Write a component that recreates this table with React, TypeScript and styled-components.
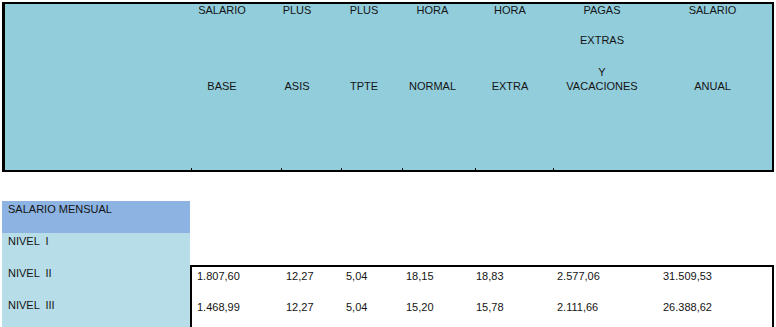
import React from 'react';
import styled, { createGlobalStyle } from 'styled-components';

const GlobalStyle = createGlobalStyle`
  html, body {
    margin: 0;
    padding: 0;
    background: #ffffff;
    overflow: hidden;
  }
  body {
    font-family: "Liberation Sans", Arial, sans-serif;
    font-size: 11px;
    line-height: 13px;
    color: #141414;
  }
`;

const Sheet = styled.div`
  width: 776px;
  height: 327px;
  overflow: hidden;
`;

const HeaderPanel = styled.div`
  margin: 2px 0 0 2px;
  width: 772px;
  height: 170px;
  box-sizing: border-box;
  border: solid #000;
  border-width: 2px 2px 2px 3px;
  background: #92cddc;
  display: flex;
  flex-direction: column;
`;

const HeaderGrid = styled.div`
  display: grid;
  grid-template-columns: 177px 80px 70px 64px 73px 82px 102px 1fr;
`;

const HeaderCell = styled.div`
  display: grid;
  grid-template-rows: 30px 32px 14px 13px;
  justify-items: center;
  text-align: center;
  white-space: nowrap;
`;

const TickRow = styled.div`
  margin-top: auto;
  display: flex;
  height: 2px;
  overflow: hidden;
  flex-shrink: 0;
  padding-left: 186px;
`;

const Tick = styled.div<{ $w: number }>`
  width: ${({ $w }) => $w}px;
  height: 2px;
  flex-shrink: 0;
  border-left: 1px solid #000;
  box-sizing: border-box;
`;

const Lower = styled.div`
  display: flex;
  align-items: flex-start;
  margin: 29px 0 0 2px;
`;

const LabelColumn = styled.div`
  width: 188px;
  flex-shrink: 0;
  display: flex;
  flex-direction: column;
`;

const LabelRow = styled.div<{ $title?: boolean }>`
  height: 32px;
  flex-shrink: 0;
  box-sizing: border-box;
  padding: 2px 6px 0;
  background: ${({ $title }) => ($title ? '#8db3e2' : '#b7dde8')};
  white-space: pre;
`;

const DataTable = styled.div`
  margin-top: 64px;
  width: 584px;
  flex-shrink: 0;
  height: 80px;
  box-sizing: border-box;
  border: 2px solid #000;
  border-bottom: none;
`;

const DataRow = styled.div`
  display: grid;
  grid-template-columns: 89px 60px 60px 70px 81px 106px 1fr;
  height: 31px;
  box-sizing: border-box;
  padding-top: 3px;
`;

const DataCell = styled.div`
  padding-left: 5px;
  white-space: nowrap;
`;

const headers: string[][] = [
  ['SALARIO', '', '', 'BASE'],
  ['PLUS', '', '', 'ASIS'],
  ['PLUS', '', '', 'TPTE'],
  ['HORA', '', '', 'NORMAL'],
  ['HORA', '', '', 'EXTRA'],
  ['PAGAS', 'EXTRAS', 'Y', 'VACACIONES'],
  ['SALARIO', '', '', 'ANUAL'],
];

// widths between the small column marks above the bottom border
const tickWidths = [90, 60, 61, 73, 78, 106];

const levels = ['NIVEL  I', 'NIVEL  II', 'NIVEL  III'];

const rows: string[][] = [
  ['1.807,60', '12,27', '5,04', '18,15', '18,83', '2.577,06', '31.509,53'],
  ['1.468,99', '12,27', '5,04', '15,20', '15,78', '2.111,66', '26.388,62'],
];

const App: React.FC = () => {
  return (
    <>
      <GlobalStyle />
      <Sheet>
        <HeaderPanel>
          <HeaderGrid>
            <div />
            {headers.map((lines, i) => (
              <HeaderCell key={i}>
                {lines.map((line, j) => (
                  <span key={j}>{line}</span>
                ))}
              </HeaderCell>
            ))}
          </HeaderGrid>
          <TickRow>
            {tickWidths.map((w, i) => (
              <Tick key={i} $w={w} />
            ))}
          </TickRow>
        </HeaderPanel>

        <Lower>
          <LabelColumn>
            <LabelRow $title>SALARIO MENSUAL</LabelRow>
            {levels.map((l) => (
              <LabelRow key={l}>{l}</LabelRow>
            ))}
          </LabelColumn>
          <DataTable>
            {rows.map((r, i) => (
              <DataRow key={i}>
                {r.map((v, j) => (
                  <DataCell key={j}>{v}</DataCell>
                ))}
              </DataRow>
            ))}
          </DataTable>
        </Lower>
      </Sheet>
    </>
  );
};

export default App;
